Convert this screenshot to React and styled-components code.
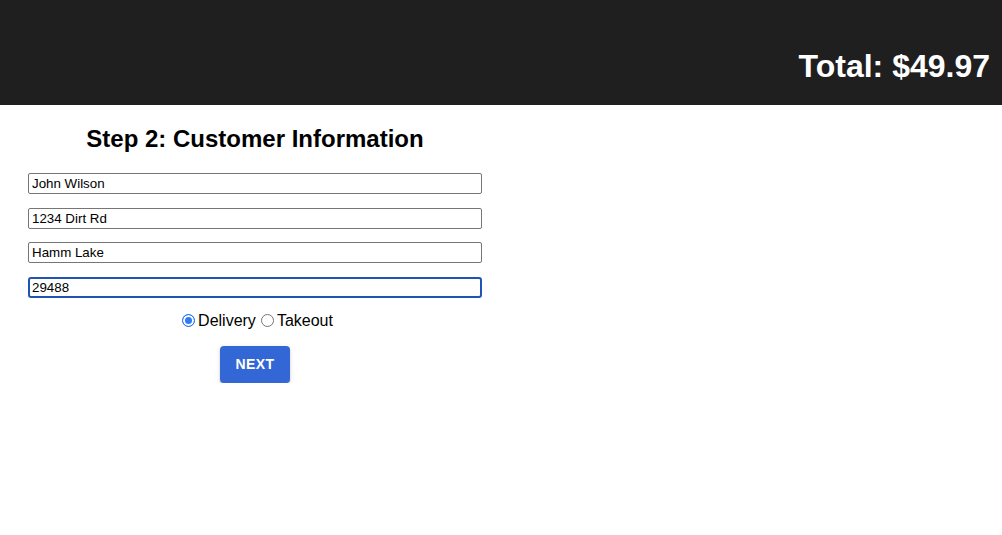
import React, { useState } from "react";
import styled, { createGlobalStyle, css } from "styled-components";

const Global = createGlobalStyle`
  html, body { margin: 0; padding: 0; background: #ffffff; }
  body { font-family: "Liberation Sans", Arial, Helvetica, sans-serif; color: #000; }
  * { box-sizing: border-box; }
`;

const Header = styled.header`
  height: 105px;
  background: #1f1f1f;
  display: flex;
  justify-content: flex-end;
  align-items: flex-start;
  padding: 48px 12px 0 0;
`;

const Total = styled.h1`
  margin: 0;
  font-size: 32px;
  line-height: 37px;
  font-weight: 700;
  color: #ffffff;
`;

const Form = styled.form`
  width: 454px;
  margin: 20px 0 0 28px;
  display: flex;
  flex-direction: column;
  align-items: stretch;
`;

const Title = styled.h2`
  margin: 0 0 20px;
  font-size: 24px;
  line-height: 28px;
  font-weight: 700;
  text-align: center;
`;

const Fields = styled.div`
  display: flex;
  flex-direction: column;
  gap: 13.67px;
`;

const Field = styled.input`
  height: 21px;
  width: 100%;
  font-family: "Liberation Sans", Arial, sans-serif;
  font-size: 13.33px;
  color: #000;
  background: #fff;
  border: 1px solid #767676;
  border-radius: 2px;
  padding: 0 3px;
  outline: none;
  caret-color: #000;
  ${(p) =>
    p.$focused &&
    css`
      border: 2px solid #1f53b4;
      border-radius: 3px;
      padding: 0 2px;
    `}
`;

const RadioRow = styled.div`
  margin-top: 13px;
  height: 20px;
  display: flex;
  justify-content: center;
  align-items: center;
`;

const Option = styled.label`
  display: flex;
  align-items: center;
  font-size: 16px;
  line-height: 20px;
  cursor: pointer;
`;

const Radio = styled.input.attrs({ type: "radio" })`
  appearance: none;
  -webkit-appearance: none;
  width: 13px;
  height: 13px;
  margin: 0 3px 0 5px;
  border-radius: 50%;
  border: 1px solid #767676;
  background: #fff;
  ${(p) =>
    p.checked &&
    css`
      border: 1px solid #1f6ff0;
      background: #2f7bf5;
      box-shadow: inset 0 0 0 2px #ffffff;
    `}
`;

const Actions = styled.div`
  margin-top: 15px;
  display: flex;
  justify-content: center;
`;

const NextButton = styled.button`
  height: 37px;
  padding: 0 16px;
  border: none;
  border-radius: 4px;
  background: #3367d6;
  color: #ffffff;
  font-family: "Liberation Sans", Arial, sans-serif;
  font-size: 14px;
  font-weight: 700;
  letter-spacing: 0.4px;
  text-transform: uppercase;
  box-shadow: 0 3px 1px -2px rgba(0, 0, 0, 0.2), 0 2px 2px 0 rgba(0, 0, 0, 0.14),
    0 1px 5px 0 rgba(0, 0, 0, 0.12);
  cursor: pointer;
`;

export default function App() {
  const [mode, setMode] = useState("delivery");
  const fields = [
    { name: "name", value: "John Wilson" },
    { name: "address", value: "1234 Dirt Rd" },
    { name: "city", value: "Hamm Lake" },
    { name: "zip", value: "29488", focused: true },
  ];
  return (
    <>
      <Global />
      <Header>
        <Total>Total: $49.97</Total>
      </Header>
      <Form onSubmit={(e) => e.preventDefault()}>
        <Title>Step 2: Customer Information</Title>
        <Fields>
          {fields.map((f) => (
            <Field
              key={f.name}
              name={f.name}
              defaultValue={f.value}
              $focused={f.focused}
              autoFocus={f.focused}
            />
          ))}
        </Fields>
        <RadioRow>
          <Option>
            <Radio
              name="mode"
              checked={mode === "delivery"}
              onChange={() => setMode("delivery")}
            />
            Delivery
          </Option>
          <Option>
            <Radio
              name="mode"
              checked={mode === "takeout"}
              onChange={() => setMode("takeout")}
            />
            Takeout
          </Option>
        </RadioRow>
        <Actions>
          <NextButton type="submit">Next</NextButton>
        </Actions>
      </Form>
    </>
  );
}
